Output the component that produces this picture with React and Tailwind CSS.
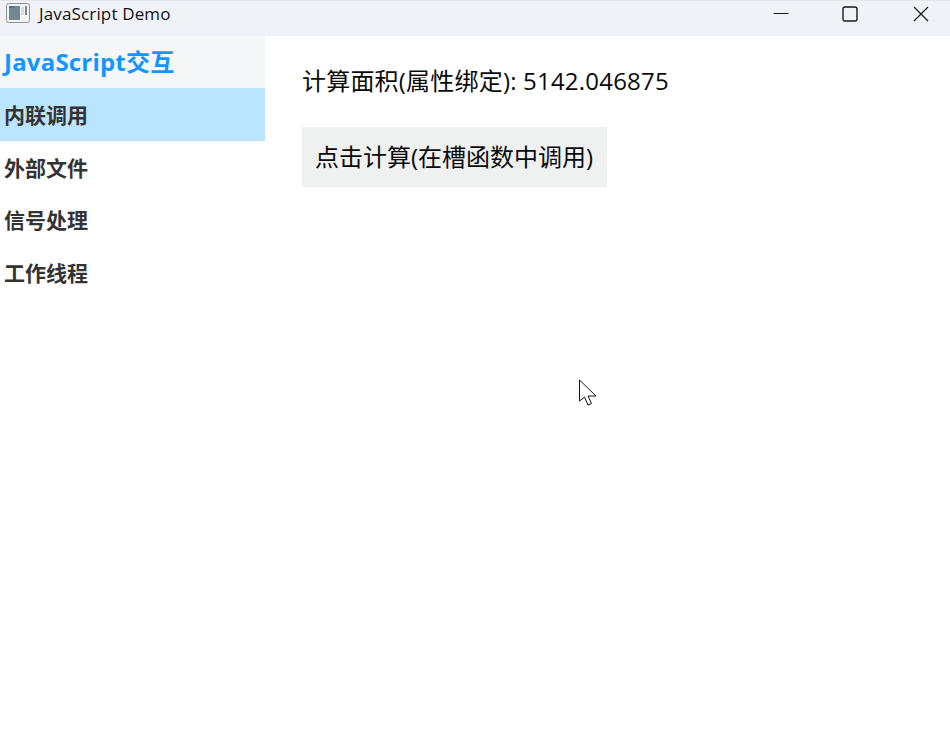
const cjk = 'font-["Open_Sans","Noto_Sans_CJK_SC",sans-serif]'

const navItems = ['内联调用', '外部文件', '信号处理', '工作线程']

function AppIcon() {
  return (
    <svg width="24" height="20" viewBox="0 0 24 20" fill="none" aria-hidden="true">
      <rect x="0.5" y="0.5" width="23" height="19" rx="2" fill="#eef0f2" stroke="#8f9498" />
      <rect x="2" y="2" width="20" height="16" fill="#f4f5f6" />
      <rect x="3" y="3" width="11" height="14" fill="#75878f" />
      <rect x="3" y="3" width="5" height="2" fill="#4a6fa8" />
      <rect x="15" y="4" width="3" height="8" fill="#d9dcde" />
      <rect x="19" y="3" width="2" height="9" fill="#7d8a94" />
    </svg>
  )
}

function TitleBar() {
  return (
    <div className="h-9 flex items-center bg-[#f0f2f8] border-t border-[#e4e6ec]">
      <div className="pl-[6px] pb-[11px] flex items-center">
        <AppIcon />
      </div>
      <span className="ml-[9px] pb-[9px] text-[17px] tracking-[0.15px] text-[#111] font-['Open_Sans',sans-serif]">JavaScript Demo</span>
      <div className="ml-auto flex items-center pb-[10px]">
        <svg width="16" height="16" viewBox="0 0 16 16" className="mr-[53px]" aria-hidden="true">
          <line x1="0.5" y1="7.5" x2="15.5" y2="7.5" stroke="#1a1a1a" strokeWidth="1" />
        </svg>
        <svg width="16" height="16" viewBox="0 0 16 16" className="mr-[55px]" aria-hidden="true">
          <rect x="1" y="1" width="14" height="14" rx="2" fill="none" stroke="#1a1a1a" strokeWidth="1.4" />
        </svg>
        <svg width="16" height="16" viewBox="0 0 16 16" className="mr-[21px]" aria-hidden="true">
          <path d="M1 1 L15 15 M15 1 L1 15" stroke="#1a1a1a" strokeWidth="1.2" />
        </svg>
      </div>
    </div>
  )
}

function Sidebar() {
  return (
    <div className="w-[265px] shrink-0">
      <div className="h-[52px] pl-1 flex items-center bg-[#f6f7f9] text-[24px] tracking-[0.2px] font-bold text-[#1296ff]">
        JavaScript交互
      </div>
      {navItems.map((item, i) => (
        <div
          key={item}
          className={`h-[52.6px] pl-1 pt-[3px] flex items-center text-[21px] font-bold text-[#333] ${i === 0 ? 'bg-[#bbe5ff]' : ''}`}
        >
          {item}
        </div>
      ))}
    </div>
  )
}

function Cursor() {
  return (
    <svg width="20" height="28" viewBox="0 0 20 28" className="absolute left-[578px] top-[379px]" aria-hidden="true">
      <path d="M1.5 1 L1.5 22 L6.5 18 L10 26 L13.5 24.5 L10 17 L18 17 Z" fill="#fff" stroke="#111" strokeWidth="1" strokeLinejoin="round" />
    </svg>
  )
}

export default function App() {
  return (
    <div className={`relative w-[950px] h-[742px] bg-white overflow-hidden ${cjk}`}>
      <TitleBar />
      <div className="flex">
        <Sidebar />
        <div className="pl-[37px] pt-[28px] text-[24px] text-[#0a0a0a]">
          <div className="h-[34px] leading-[34px] tracking-[0.2px]">计算面积(属性绑定): 5142.046875</div>
          <button className="mt-[29px] h-[60px] w-[305px] pr-[1px] flex items-center justify-center bg-[#eff0f0] text-[24px] text-[#0a0a0a]">
            点击计算(在槽函数中调用)
          </button>
        </div>
      </div>
      <Cursor />
    </div>
  )
}
